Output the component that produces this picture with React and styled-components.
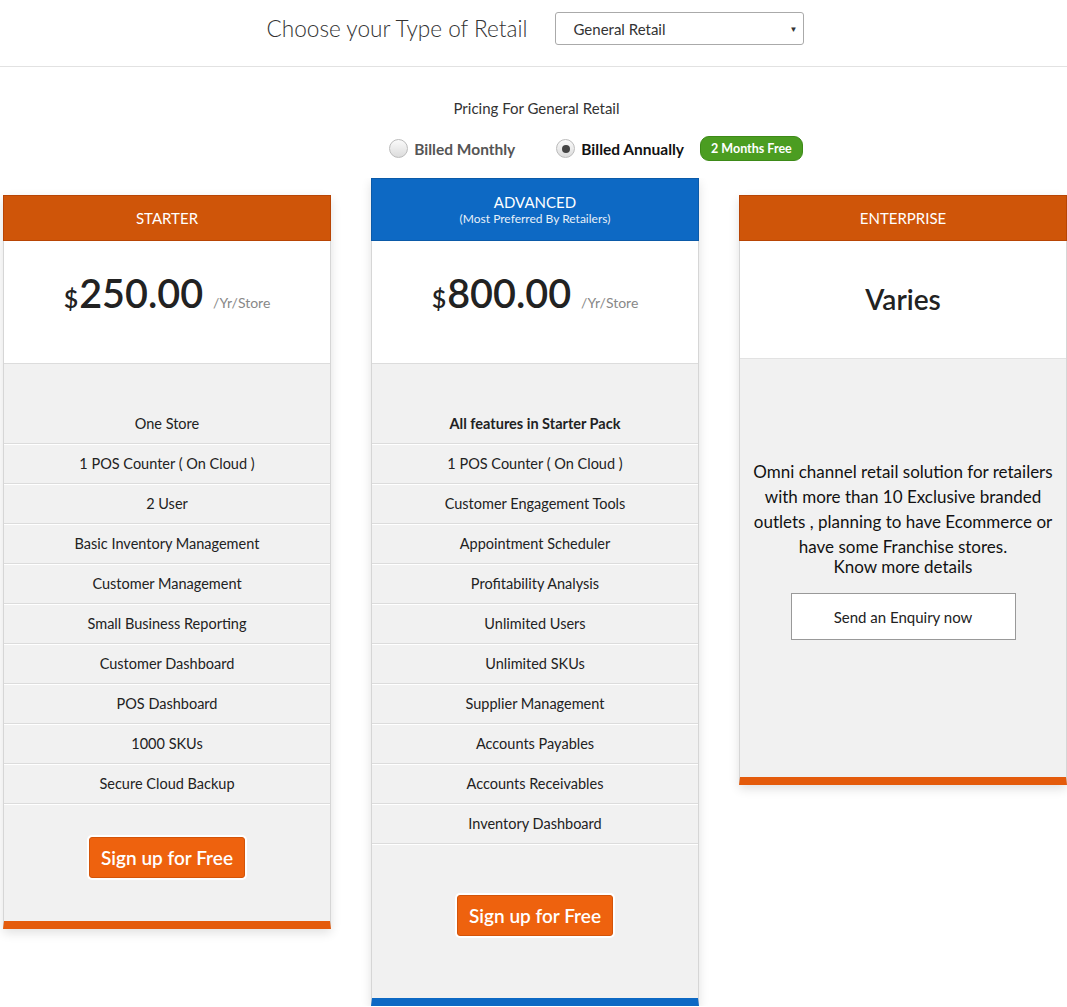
import React, { useState } from "react";
import styled, { createGlobalStyle } from "styled-components";

const GlobalStyle = createGlobalStyle`
  * { box-sizing: border-box; }
  body {
    margin: 0;
    background: #fff;
    font-family: Lato, "Open Sans", sans-serif;
    color: #222;
  }
`;

const ORANGE = "#cf5509";
const BLUE = "#0d69c4";

const plans = [
  {
    name: "STARTER",
    color: ORANGE,
    price: "250.00",
    features: [
      "One Store",
      "1 POS Counter ( On Cloud )",
      "2 User",
      "Basic Inventory Management",
      "Customer Management",
      "Small Business Reporting",
      "Customer Dashboard",
      "POS Dashboard",
      "1000 SKUs",
      "Secure Cloud Backup",
    ],
    footTop: 33,
    footBottom: 43,
  },
  {
    name: "ADVANCED",
    sub: "(Most Preferred By Retailers)",
    color: BLUE,
    price: "800.00",
    features: [
      "All features in Starter Pack",
      "1 POS Counter ( On Cloud )",
      "Customer Engagement Tools",
      "Appointment Scheduler",
      "Profitability Analysis",
      "Unlimited Users",
      "Unlimited SKUs",
      "Supplier Management",
      "Accounts Payables",
      "Accounts Receivables",
      "Inventory Dashboard",
    ],
    footTop: 51,
    footBottom: 62,
  },
];

const App = () => {
  const [billing, setBilling] = useState("annual");

  return (
    <>
      <GlobalStyle />
      <TopBar>
        <Title>Choose your Type of Retail</Title>
        <SelectBox>
          <span>General Retail</span>
          <Caret>▼</Caret>
        </SelectBox>
      </TopBar>

      <Intro>
        <IntroLabel>Pricing For General Retail</IntroLabel>
        <BillingRow>
          <RadioLabel onClick={() => setBilling("monthly")} $active={billing === "monthly"}>
            <Radio $checked={billing === "monthly"} />
            Billed Monthly
          </RadioLabel>
          <RadioLabel onClick={() => setBilling("annual")} $active={billing === "annual"}>
            <Radio $checked={billing === "annual"} />
            Billed Annually
          </RadioLabel>
          <Badge>2 Months Free</Badge>
        </BillingRow>
      </Intro>

      <Cards>
        {plans.map((p) => (
          <Card key={p.name} $raised={!!p.sub} $accent={p.color}>
            <CardHead $color={p.color} $tall={!!p.sub}>
              <span>{p.name}</span>
              {p.sub && <Sub>{p.sub}</Sub>}
            </CardHead>
            <PriceBox>
              <Dollar>$</Dollar>
              <Amount>{p.price}</Amount>
              <Per>/Yr/Store</Per>
            </PriceBox>
            <Features>
              {p.features.map((f, i) => (
                <Feature key={f} $bold={p.sub && i === 0}>
                  {f}
                </Feature>
              ))}
            </Features>
            <Foot $top={p.footTop} $bottom={p.footBottom}>
              <SignUp>Sign up for Free</SignUp>
            </Foot>
          </Card>
        ))}

        <Card $accent={ORANGE}>
          <CardHead $color={ORANGE}>
            <span>ENTERPRISE</span>
          </CardHead>
          <VariesBox>Varies</VariesBox>
          <EnterpriseBody>
            <Blurb>
              Omni channel retail solution for retailers with more than 10 Exclusive branded
              outlets , planning to have Ecommerce or have some Franchise stores.
            </Blurb>
            <KnowMore>Know more details</KnowMore>
            <Enquiry>Send an Enquiry now</Enquiry>
          </EnterpriseBody>
        </Card>
      </Cards>
    </>
  );
};

const TopBar = styled.header`
  height: 67px;
  border-bottom: 1px solid #e2e2e2;
  display: flex;
  align-items: center;
  justify-content: center;
  gap: 28px;
  padding-left: 4px;
  padding-bottom: 10px;
`;

const Title = styled.h1`
  margin: 0;
  font-size: 22.6px;
  font-weight: 300;
  color: #333;
`;

const SelectBox = styled.div`
  width: 249px;
  height: 33px;
  border: 1px solid #aaa;
  border-radius: 3px;
  display: flex;
  align-items: center;
  justify-content: space-between;
  padding: 2px 6px 0 17px;
  font-size: 15px;
  color: #333;
`;

const Caret = styled.span`
  font-size: 8px;
  color: #333;
`;

const Intro = styled.section`
  display: flex;
  flex-direction: column;
  align-items: center;
  padding-top: 32px;
`;

const IntroLabel = styled.div`
  font-size: 15px;
  color: #333;
  padding-left: 6px;
`;

const BillingRow = styled.div`
  display: flex;
  align-items: center;
  margin-top: 19px;
  padding-left: 125px;
`;

const RadioLabel = styled.label`
  display: flex;
  align-items: center;
  gap: 6px;
  font-size: 15.5px;
  font-weight: 700;
  color: ${(p) => (p.$active ? "#111" : "#555")};
  margin-right: 41px;
  cursor: pointer;
  &:last-of-type {
    margin-right: 16px;
  }
`;

const Radio = styled.span`
  width: 19px;
  height: 19px;
  border-radius: 50%;
  border: 1px solid #bbb;
  background: linear-gradient(#fafafa, #dcdcdc);
  display: flex;
  align-items: center;
  justify-content: center;
  &::after {
    content: "";
    width: 8px;
    height: 8px;
    border-radius: 50%;
    background: #444;
    display: ${(p) => (p.$checked ? "block" : "none")};
  }
`;

const Badge = styled.span`
  background: #4b9d21;
  border: 1px solid #3d8a18;
  color: #fff;
  font-size: 12.5px;
  font-weight: 700;
  border-radius: 9px;
  padding: 4px 10px;
`;

const Cards = styled.main`
  display: flex;
  align-items: flex-start;
  gap: 40px;
  padding-left: 3px;
  margin-top: 17px;
  overflow: hidden;
`;

const Card = styled.article`
  flex: 0 0 328px;
  background: #f1f1f1;
  border-left: 1px solid #d6d6d6;
  border-right: 1px solid #d6d6d6;
  border-bottom: 8px solid ${(p) => (p.$accent === BLUE ? BLUE : "#e45b0c")};
  box-shadow: 0 4px 10px rgba(0, 0, 0, 0.12);
  margin-top: ${(p) => (p.$raised ? 0 : 17)}px;
`;

const CardHead = styled.div`
  background: ${(p) => p.$color};
  border: 1px solid ${(p) => (p.$color === BLUE ? "#0b5aa8" : "#b84505")};
  margin: 0 -1px;
  height: ${(p) => (p.$tall ? 63 : 46)}px;
  color: #fff;
  font-size: 15px;
  display: flex;
  flex-direction: column;
  align-items: center;
  justify-content: center;
  line-height: 1.1;
`;

const Sub = styled.span`
  font-size: 12px;
  margin-top: 1px;
  opacity: 0.9;
`;

const PriceBox = styled.div`
  background: #fff;
  height: 123px;
  border-bottom: 1px solid #dcdcdc;
  display: flex;
  align-items: baseline;
  justify-content: center;
  padding-top: 28px;
  color: #222;
`;

const Dollar = styled.span`
  font-size: 25px;
  font-weight: 600;
`;

const Amount = styled.span`
  font-size: 39.5px;
  font-weight: 600;
  margin-left: 1px;
`;

const Per = styled.span`
  font-size: 14px;
  color: #888;
  margin-left: 10px;
`;

const Features = styled.ul`
  list-style: none;
  margin: 0;
  padding: 40px 0 0;
`;

const Feature = styled.li`
  height: 40px;
  display: flex;
  align-items: center;
  justify-content: center;
  font-size: 14.5px;
  font-weight: ${(p) => (p.$bold ? 700 : 400)};
  color: #222;
  border-bottom: 1px solid #dcdcdc;
  box-shadow: 0 1px 0 #fff;
`;

const Foot = styled.div`
  display: flex;
  justify-content: center;
  padding: ${(p) => p.$top}px 0 ${(p) => p.$bottom}px;
`;

const SignUp = styled.button`
  background: #ee620e;
  border: 1px solid #d35409;
  border-radius: 3px;
  color: #fff;
  font-family: inherit;
  font-size: 19px;
  font-weight: 600;
  height: 41px;
  padding: 0 11px;
  box-shadow: 0 0 0 2px #fff;
  cursor: pointer;
`;

const VariesBox = styled.div`
  background: #fff;
  height: 118px;
  border-bottom: 1px solid #e2e2e2;
  display: flex;
  align-items: center;
  justify-content: center;
  padding-bottom: 2px;
  font-size: 28px;
  font-weight: 600;
  color: #222;
`;

const EnterpriseBody = styled.div`
  padding: 100px 6px 137px;
  display: flex;
  flex-direction: column;
  align-items: center;
  text-align: center;
  color: #111;
`;

const Blurb = styled.p`
  margin: 0;
  font-size: 17px;
  line-height: 25px;
`;

const KnowMore = styled.div`
  font-size: 17px;
  line-height: 15px;
`;

const Enquiry = styled.button`
  margin-top: 19px;
  width: 225px;
  height: 47px;
  background: #fff;
  border: 1px solid #999;
  font-family: inherit;
  font-size: 15px;
  color: #222;
  cursor: pointer;
`;

export default App;
